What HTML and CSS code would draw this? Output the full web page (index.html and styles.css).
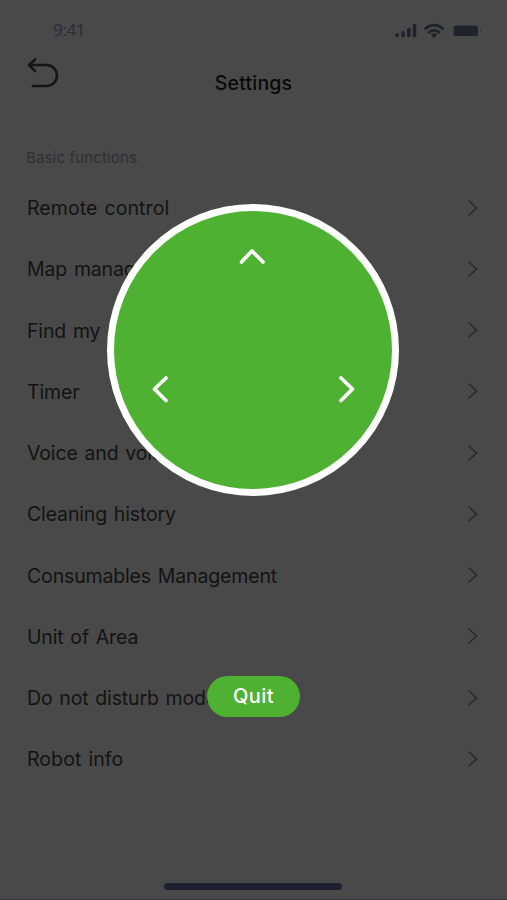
FILE: index.html
```html
<!DOCTYPE html>
<html lang="en">
<head>
<meta charset="utf-8">
<title>Settings</title>
<link rel="stylesheet" href="styles.css">
</head>
<body>
<div class="phone">
	<div class="status">
		<span class="time">9:41</span>
		<svg class="signs" width="88" height="18" viewBox="0 0 88 18">
			<path d="M4 13v.6M10 10.800v2.800M15.800 7.500v6.100M21.500 3.500v10.100" stroke-width="3.600" stroke-linecap="round"/>
			<path d="M32.500 6.500a12.500 12.500 0 0 1 17 0M36 10.300a7.500 7.500 0 0 1 10 0" stroke-width="2.800" stroke-linecap="round"/>
			<path class="fill" d="M37.800 12.700a5 5 0 0 1 6.400 0L41 16z"/>
			<rect class="fill" x="60.500" y="3.500" width="24.500" height="10.500" rx="2.500"/>
			<path class="tip" d="M87.500 7.500v3" stroke-width="1"/>
		</svg>
	</div>
	<div class="head">
		<svg class="back" width="36" height="32" viewBox="0 0 36 32">
			<path d="M9 2.500L3 8l6 6M3.500 8H20.500a10.500 10.500 0 0 1 0 21H7"/>
		</svg>
		<h1>Settings</h1>
	</div>
	<h2>Basic functions</h2>
	<ul class="list">
		<li><span class="wide">Remote control</span><svg class="arrow" viewBox="0 0 10 16"><path d="M1 1l7.500 7L1 15"/></svg></li>
		<li><span>Map management</span><svg class="arrow" viewBox="0 0 10 16"><path d="M1 1l7.500 7L1 15"/></svg></li>
		<li><span>Find my robot</span><svg class="arrow" viewBox="0 0 10 16"><path d="M1 1l7.500 7L1 15"/></svg></li>
		<li><span>Timer</span><svg class="arrow" viewBox="0 0 10 16"><path d="M1 1l7.500 7L1 15"/></svg></li>
		<li><span>Voice and volume</span><svg class="arrow" viewBox="0 0 10 16"><path d="M1 1l7.500 7L1 15"/></svg></li>
		<li><span>Cleaning history</span><svg class="arrow" viewBox="0 0 10 16"><path d="M1 1l7.500 7L1 15"/></svg></li>
		<li><span>Consumables Management</span><svg class="arrow" viewBox="0 0 10 16"><path d="M1 1l7.500 7L1 15"/></svg></li>
		<li><span>Unit of Area</span><svg class="arrow" viewBox="0 0 10 16"><path d="M1 1l7.500 7L1 15"/></svg></li>
		<li><span>Do not disturb mode</span><svg class="arrow" viewBox="0 0 10 16"><path d="M1 1l7.500 7L1 15"/></svg></li>
		<li><span class="wide">Robot info</span><svg class="arrow" viewBox="0 0 10 16"><path d="M1 1l7.500 7L1 15"/></svg></li>
	</ul>
	<div class="home"></div>
	<!-- remote control pad -->
	<div class="pad">
		<svg width="278" height="278" viewBox="0 0 278 278">
			<path d="M127.500 51L138 40l11 11M52 167L40.500 178 52 189.500M227 167l11.500 11-11.500 11.500"/>
		</svg>
	</div>
	<button class="quit">Quit</button>
</div>
</body>
</html>
```
FILE: styles.css
```css
body{margin:0; background:#494949; color:#131313; font-family:Inter,"Liberation Sans",sans-serif;}
h1,h2,ul{margin:0; padding:0; font-weight:normal;}
svg{display:block; fill:none;}
.phone{position:relative; box-sizing:border-box; height:900px; overflow:hidden; border-bottom:1px solid #40353a;}

.status{display:flex; justify-content:space-between; height:60px; padding:0 26px 0 53px; box-sizing:border-box;}
.time{font-family:"Noto Sans",sans-serif; font-size:17px; line-height:60px; letter-spacing:-.4px; color:#2d2d39;}
.signs{margin-top:22px; stroke:#22222d;}
.signs .fill{fill:#22222d; stroke:none;}
.signs .tip{stroke:#37373c;}

.head{display:grid; grid-template-columns:80px 1fr 80px; height:46px;}
.back{margin:-3px 0 0 26px; stroke:#151515; stroke-width:2.6; stroke-linecap:round; stroke-linejoin:round;}
h1{text-align:center; font-size:19.5px; line-height:46px; font-weight:500; color:#090909; letter-spacing:.2px;}

h2{height:71px; padding:42px 0 0 26px; box-sizing:border-box; font-size:15px; line-height:20px; color:#303030; letter-spacing:.15px;}
.list{list-style:none; padding:0 29px 0 27px;}
.list li{display:flex; align-items:center; justify-content:space-between; height:61.25px; font-size:19.5px; letter-spacing:-.15px; word-spacing:1.5px; white-space:nowrap;}
.list span{padding-top:1px;}
.list .wide{letter-spacing:.08px;}
.arrow{width:10px; height:16px; stroke:#292929; stroke-width:1.5; stroke-linecap:round;}
.home{position:absolute; left:164px; bottom:9px; width:178px; height:7px; border-radius:4px; background:#201f2f;}

.pad{position:absolute; left:107px; top:204px; width:278px; height:278px; border:7px solid #fff; border-radius:50%; background:#4fb132;}
.pad svg{stroke:#fff; stroke-width:3.6; stroke-linecap:round; stroke-linejoin:round;}
.quit{position:absolute; left:207px; top:676px; width:93px; height:41px; padding:0; border:0; border-radius:21px; background:#4fb132; color:#fff; font:500 20px/41px Inter,sans-serif; letter-spacing:.4px;}
```
